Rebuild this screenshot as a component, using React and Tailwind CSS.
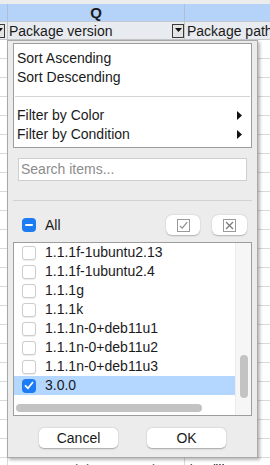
import React from "react";

const items = [
  "1.1.1f-1ubuntu2.13",
  "1.1.1f-1ubuntu2.4",
  "1.1.1g",
  "1.1.1k",
  "1.1.1n-0+deb11u1",
  "1.1.1n-0+deb11u2",
  "1.1.1n-0+deb11u3",
  "3.0.0",
];

function DropBtn({ className = "" }) {
  return (
    <div
      className={
        "w-[12px] h-[14px] border border-[#3a3a3a] bg-[#e4e4e4] flex justify-center pt-[3px] " +
        className
      }
    >
      <svg width="7" height="4" viewBox="0 0 7 4">
        <polygon points="0,0 7,0 3.5,4" fill="#111" />
      </svg>
    </div>
  );
}

function Arrow() {
  return (
    <svg width="5" height="9" viewBox="0 0 5 9">
      <polygon points="0,0 5,4.5 0,9" fill="#111" />
    </svg>
  );
}

function Box({ checked }) {
  if (checked) {
    return (
      <div className="w-[14px] h-[14px] rounded-[4px] bg-[#1b7cf3] flex items-center justify-center shrink-0">
        <svg width="10" height="9" viewBox="0 0 10 9">
          <path d="M1.5 4.8 L4 7.3 L8.6 1.5" stroke="white" strokeWidth="1.8" fill="none" strokeLinecap="round" strokeLinejoin="round" />
        </svg>
      </div>
    );
  }
  return (
    <div className="w-[14px] h-[14px] rounded-[3px] border border-[#cdcdcd] bg-white shadow-[0_0.5px_1px_rgba(0,0,0,0.08)] shrink-0" />
  );
}

export default function App() {
  const rows = Array.from({ length: 23 });
  return (
    <div className="relative w-[270px] h-[465px] overflow-hidden bg-white font-['Liberation_Sans',Arial,sans-serif] text-[#1a1a1a]">
      {/* top band */}
      <div className="h-[4px] bg-[#ececec]" />
      {/* column header */}
      <div className="flex h-[18px] bg-[#b5d3f8] border-b border-[#c4c9d0]">
        <div className="w-[8px] border-r border-[#aebfd4]" />
        <div className="w-[177px] border-r border-[#aebfd4] flex items-center justify-center text-[15px] font-bold leading-none">
          Q
        </div>
        <div className="flex-1" />
      </div>
      {/* header row */}
      <div className="flex h-[18px] bg-[#e8ebef] border-b border-[#c8c8c8]">
        <div className="w-[8px] border-r border-[#c4c4c4] flex items-center overflow-hidden">
          <DropBtn className="ml-[-7px] shrink-0" />
        </div>
        <div className="w-[177px] border-r border-[#c4c4c4] flex items-center justify-between pl-[1px]">
          <span className="text-[14px] leading-none">Package version</span>
          <DropBtn className="shrink-0" />
        </div>
        <div className="flex-1 flex items-center pl-[2px] whitespace-nowrap overflow-hidden">
          <span className="text-[14px] leading-none">Package path</span>
        </div>
      </div>
      {/* grid rows */}
      {rows.map((_, i) => (
        <div key={i} className="flex h-[19px] border-b border-[#d9d9d9]">
          <div className="w-[8px] border-r border-[#d9d9d9]" />
          <div className="w-[177px] border-r border-[#d9d9d9] pl-[3px] pt-[5px] text-[14px] leading-none text-[#555] whitespace-nowrap overflow-hidden">
            {i === 22 ? "1.1.1n-0+deb11u1 amd64" : ""}
          </div>
          <div className="flex-1 pl-[3px] pt-[5px] text-[14px] leading-none whitespace-nowrap overflow-hidden">
            {i === 22 ? <span className="underline decoration-dotted decoration-[#e02020]">/usr/lib</span> : ""}
          </div>
        </div>
      ))}

      {/* popup */}
      <div className="absolute left-[7px] top-[40px] w-[251px] h-[418px] bg-[#ececec] border border-[#a9a9a9] shadow-[2px_2px_3px_rgba(0,0,0,0.28)] px-[5px] flex flex-col">
        {/* menu box */}
        <div className="mt-[2px] h-[105px] bg-white border border-[#9d9d9d] pt-[5px]">
          <div className="h-[19px] flex items-center pl-[3px] text-[14px]">Sort Ascending</div>
          <div className="h-[19px] flex items-center pl-[3px] text-[14px]">Sort Descending</div>
          <div className="h-[19px] flex items-center px-[1px]">
            <div className="h-px w-full bg-[#d4d4d4]" />
          </div>
          <div className="h-[19px] flex items-center justify-between pl-[3px] pr-[9px] text-[14px]">
            <span>Filter by Color</span>
            <Arrow />
          </div>
          <div className="h-[19px] flex items-center justify-between pl-[3px] pr-[9px] text-[14px]">
            <span>Filter by Condition</span>
            <Arrow />
          </div>
        </div>
        {/* search */}
        <div className="mt-[10px] mx-[5px] h-[23px] bg-white border border-[#cfcfcf] flex items-center pl-[2px] text-[14px] text-[#8c8c8c]">
          Search items...
        </div>
        {/* separator */}
        <div className="mt-[19px] h-px bg-[#d2d2d2]" />
        {/* All row */}
        <div className="mt-[14px] h-[20px] flex items-center pl-[9px] pr-[5px]">
          <div className="w-[14px] h-[14px] rounded-[4px] bg-[#1b7cf3] flex items-center justify-center">
            <div className="w-[8px] h-[2px] bg-white rounded-[1px]" />
          </div>
          <span className="ml-[9px] text-[14px]">All</span>
          <div className="flex-1" />
          <div className="w-[34px] h-[20px] rounded-[6px] bg-white shadow-[0_0.5px_1.5px_rgba(0,0,0,0.25)] flex items-center justify-center">
            <svg width="13" height="13" viewBox="0 0 13 13">
              <rect x="0.5" y="0.5" width="12" height="12" fill="none" stroke="#9a9a9a" />
              <path d="M2.8 6.8 L5.2 9.2 L10.2 3.2" stroke="#8a8a8a" strokeWidth="1.1" fill="none" />
            </svg>
          </div>
          <div className="ml-[12px] w-[35px] h-[20px] rounded-[6px] bg-white shadow-[0_0.5px_1.5px_rgba(0,0,0,0.25)] flex items-center justify-center">
            <svg width="13" height="13" viewBox="0 0 13 13">
              <rect x="0.5" y="0.5" width="12" height="12" fill="none" stroke="#9a9a9a" />
              <path d="M3 3 L10 10 M10 3 L3 10" stroke="#7a7a7a" strokeWidth="1.3" fill="none" />
            </svg>
          </div>
        </div>
        {/* list */}
        <div className="mt-[7px] h-[174px] bg-white border border-[#9d9d9d] flex">
          <div className="flex-1 flex flex-col">
            <div className="h-[152px] flex flex-col">
              {items.map((t, i) => {
                const sel = t === "3.0.0";
                return (
                  <div
                    key={t}
                    className={
                      "h-[19px] flex items-center pl-[8px] gap-[9px] text-[14px] " +
                      (sel ? "bg-[#b3d7ff]" : "")
                    }
                  >
                    <Box checked={sel} />
                    <span>{t}</span>
                  </div>
                );
              })}
            </div>
            <div className="h-[20px] pt-[9px] pl-[2px]">
              <div className="w-[186px] h-[8px] rounded-full bg-[#c3c3c3]" />
            </div>
          </div>
          <div className="w-[16px] bg-[#f6f6f6] border-l border-[#ececec] pt-[112px] flex justify-center">
            <div className="w-[8px] h-[43px] rounded-full bg-[#c3c3c3]" />
          </div>
        </div>
        {/* buttons */}
        <div className="mt-[12px] flex justify-center gap-[29px]">
          <div className="w-[79px] h-[20px] rounded-[5px] bg-white shadow-[0_0.5px_1.5px_rgba(0,0,0,0.3)] flex items-center justify-center text-[14px]">
            Cancel
          </div>
          <div className="w-[79px] h-[20px] rounded-[5px] bg-white shadow-[0_0.5px_1.5px_rgba(0,0,0,0.3)] flex items-center justify-center text-[14px]">
            OK
          </div>
        </div>
      </div>
    </div>
  );
}
